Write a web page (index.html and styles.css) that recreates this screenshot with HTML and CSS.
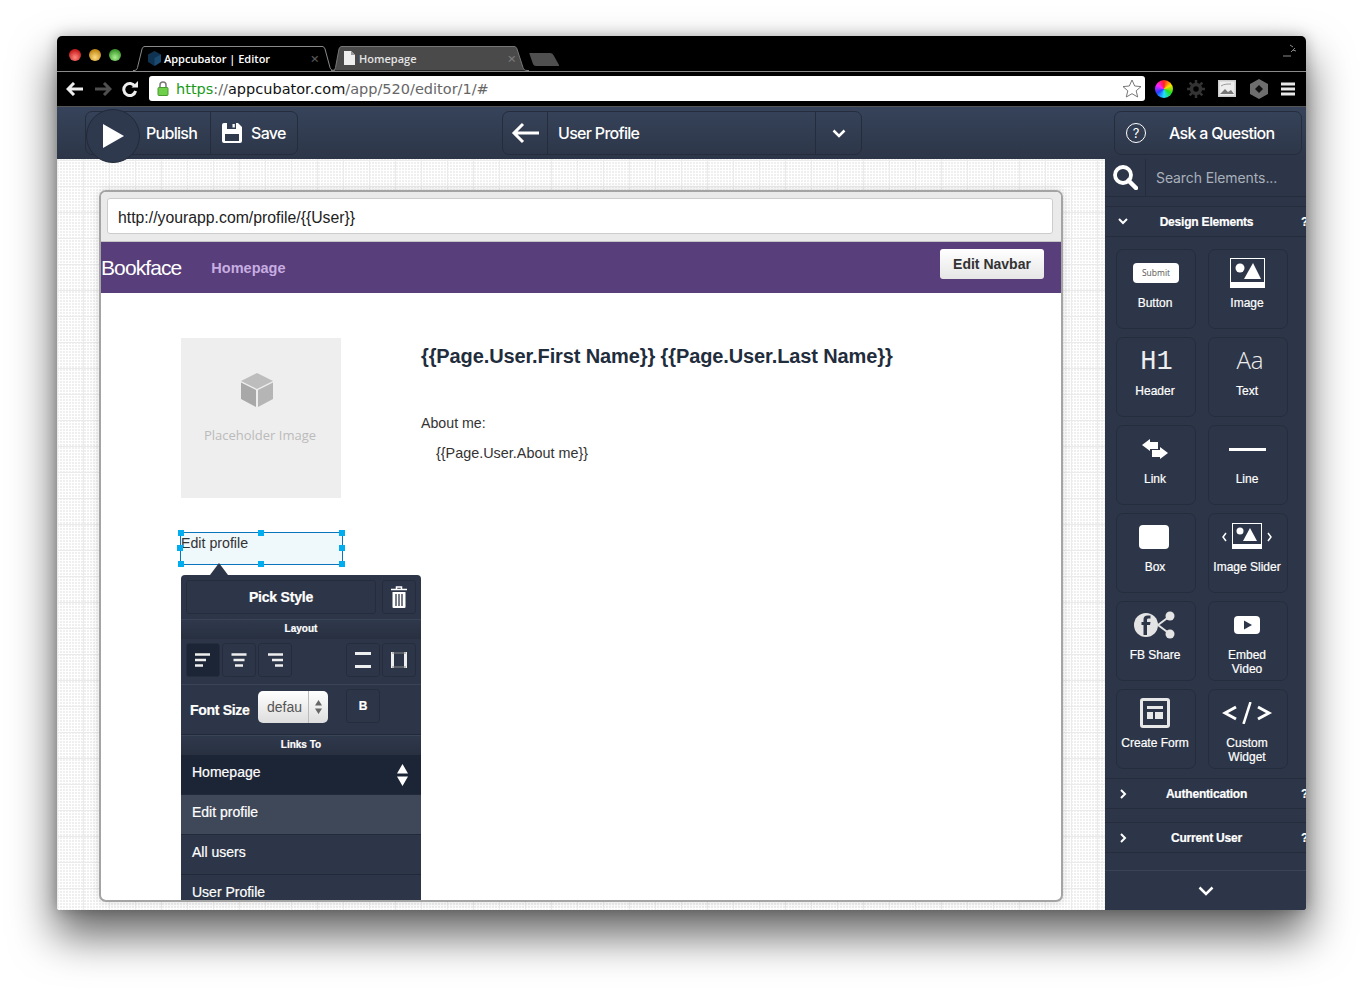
FILE: index.html
```html
<!DOCTYPE html>
<html lang="en">

<head>
    <meta charset="UTF-8">
    <title>Appcubator | Editor</title>
    <link rel="stylesheet" href="styles.css">
</head>

<body>
    <div class="window">

        <!-- browser chrome -->
        <div class="tabbar">
            <div class="lights">
                <span class="light red"></span>
                <span class="light yellow"></span>
                <span class="light green"></span>
            </div>
            <div class="tab tab-active">
                <svg class="tab-shape" width="202" height="25" viewBox="0 0 202 25"><path d="M0 24.500h1c2 0 3-1 3.500-3L9 3c.5-1.600 1.400-2.500 3-2.500h177c1.600 0 2.400.9 3 2.500l5 18.500c.6 2 2 3 4 3h1" fill="#000" stroke="#8a8a8a"/></svg>
                <svg class="tab-icon" width="15" height="15" viewBox="0 0 15 15"><path d="M7.500 0L14 3.500V11L7.500 15 1 11V3.500z" fill="#0f3350"/><path d="M7.500 7L14 3.500V11L7.500 15z" fill="#1a4a70"/></svg>
                <span class="tab-title">Appcubator | Editor</span>
                <span class="tab-x">×</span>
            </div>
            <div class="tab tab-other">
                <svg class="tab-shape" width="202" height="25" viewBox="0 0 202 25"><path d="M0 24.500h1c2 0 3-1 3.500-3L8 3c.5-1.600 1.400-2.500 3-2.500h172c1.600 0 2.400.9 3 2.500l6 18.500c.6 2 2 3 4 3h2" fill="#4a4a4a" stroke="#777"/></svg>
                <svg class="tab-icon" width="11" height="14" viewBox="0 0 11 14"><path d="M0 0h7l4 4v10H0z" fill="#eee"/><path d="M7 0v4h4z" fill="#999"/></svg>
                <span class="tab-title">Homepage</span>
                <span class="tab-x">×</span>
            </div>
            <svg class="new-tab" width="32" height="14" viewBox="0 0 32 14"><path d="M1 1h20c2 0 3 1 4 3l5 9c.3.600 0 1-.6 1H7c-1.500 0-2.400-.7-3-2L.5 2C.2 1.400.4 1 1 1z" fill="#4f4f4f"/></svg>
            <svg class="resize" width="14" height="14" viewBox="0 0 14 14"><path d="M0 13h8M8 9l4-4M7 2l3 2M10 7l3 1" stroke="#8a8a8a" fill="none"/></svg>
        </div>

        <div class="toolbar">
            <svg class="nav-arrow" width="18" height="14" viewBox="0 0 18 14"><path d="M8 1L2 7l6 6M2.500 7H17" fill="none" stroke="#eee" stroke-width="3"/></svg>
            <svg class="nav-arrow" width="18" height="14" viewBox="0 0 18 14"><path d="M10 1l6 6-6 6M15.500 7H1" fill="none" stroke="#4f4f4f" stroke-width="3"/></svg>
            <svg class="nav-arrow" width="16" height="16" viewBox="0 0 16 16"><path d="M13 5.500A6 6 0 1 0 13.600 10" fill="none" stroke="#eee" stroke-width="3"/><path d="M9.500 6.500H16V0z" fill="#eee"/></svg>
            <div class="omnibox">
                <svg class="lock" width="12" height="15" viewBox="0 0 12 15"><path d="M3 7V4a3 3 0 0 1 6 0v3" fill="none" stroke="#777" stroke-width="1.500"/><rect x="1" y="6.500" width="10" height="8" rx="1" fill="#6fcf4a" stroke="#4a9a33"/></svg>
                <span class="url"><span class="url-green">https</span><span class="url-gray">://</span>appcubator.com<span class="url-gray">/app/520/editor/1/#</span></span>
                <svg class="star" width="20" height="19" viewBox="0 0 20 19"><path d="M10 1l2.700 6 6.300.6-4.800 4.200 1.500 6.200L10 14.700 4.300 18l1.500-6.200L1 7.600 7.300 7z" fill="#fff" stroke="#777"/></svg>
            </div>
            <div class="extensions">
                <span class="wheel"></span>
                <svg width="18" height="18" viewBox="0 0 18 18"><circle cx="9" cy="9" r="4.500" fill="none" stroke="#333" stroke-width="3.500"/><path d="M9 0v4M9 14v4M0 9h4M14 9h4M2.600 2.600l2.800 2.800M12.600 12.600l2.800 2.800M2.600 15.400l2.800-2.800M12.600 5.400l2.800-2.800" stroke="#333" stroke-width="2.500"/></svg>
                <svg width="18" height="17" viewBox="0 0 18 17"><rect width="18" height="17" fill="#ccc"/><rect x="1.500" y="1.500" width="15" height="14" fill="#eee"/><path d="M2 14l5-5 3 3 3-2 3 4z" fill="#777"/><path d="M3 6c3-2 6-2 10-2" stroke="#999" fill="none"/></svg>
                <svg width="18" height="20" viewBox="0 0 18 20"><path d="M9 0l9 5v10l-9 5-9-5V5z" fill="#6e6e6e"/><path d="M9 6l4 4-4 4-4-4z" fill="#111"/></svg>
                <svg width="14" height="14" viewBox="0 0 14 14"><path d="M0 2h14M0 7h14M0 12h14" stroke="#e8e8e8" stroke-width="3"/></svg>
            </div>
        </div>

        <!-- editor header -->
        <div class="app-header">
            <div class="group group-left">
                <div class="play">
                    <svg width="21" height="24" viewBox="0 0 21 24"><path d="M0 0l21 12L0 24z" fill="#fff"/></svg>
                </div>
                <div class="cell cell-publish">Publish</div>
                <div class="cell cell-save">
                    <svg width="20" height="20" viewBox="0 0 20 20"><path d="M2 0h3v6h9V0h2l4 4v14a2 2 0 0 1-2 2H2a2 2 0 0 1-2-2V2a2 2 0 0 1 2-2z" fill="#fff"/><rect x="10.500" y="1" width="2.300" height="3.500" fill="#fff"/><rect x="3" y="11" width="14" height="7" fill="#2f3a4d"/></svg>
                    Save
                </div>
            </div>
            <div class="group group-page">
                <div class="cell cell-back">
                    <svg width="28" height="22" viewBox="0 0 28 22"><path d="M12 2L3 11l9 9M4 11h24" fill="none" stroke="#fff" stroke-width="3"/></svg>
                </div>
                <div class="cell cell-page">User Profile</div>
                <div class="cell cell-down">
                    <svg width="14" height="9" viewBox="0 0 14 9"><path d="M1.500 1.500L7 7l5.500-5.500" fill="none" stroke="#fff" stroke-width="2.500"/></svg>
                </div>
            </div>
            <div class="group group-help">
                <span class="help-mark">?</span>
                <span>Ask a Question</span>
            </div>
        </div>

        <div class="workspace">
            <div class="canvas">
                <div class="frame">
                    <div class="frame-top">
                        <div class="route">http://yourapp.com/profile/{{User}}</div>
                    </div>
                    <div class="navbar">
                        <span class="brand">Bookface</span>
                        <span class="nav-link">Homepage</span>
                        <span class="edit-navbar">Edit Navbar</span>
                    </div>
                    <div class="page">
                        <div class="page-left">
                            <div class="placeholder">
                                <svg class="cube" width="32" height="34" viewBox="0 0 32 34"><path d="M16 0l16 8-16 8L0 8z" fill="#bdbdbd"/><path d="M0 9.500l15 7.500v17L0 26z" fill="#a8a8a8"/><path d="M32 9.500L17 17v17l15-8z" fill="#b5b5b5"/></svg>
                                <span>Placeholder Image</span>
                            </div>
                            <div class="selected">
                                Edit profile
                                <span class="handle h-tl"></span>
                                <span class="handle h-tm"></span>
                                <span class="handle h-tr"></span>
                                <span class="handle h-ml"></span>
                                <span class="handle h-mr"></span>
                                <span class="handle h-bl"></span>
                                <span class="handle h-bm"></span>
                                <span class="handle h-br"></span>

                                <div class="popover">
                                    <div class="pop-row pop-style">
                                        <div class="pop-btn pick-style">Pick Style</div>
                                        <div class="pop-btn square">
                                            <svg width="16" height="22" viewBox="0 0 16 22"><path d="M0 3.500h16M5.500 3V1h5v2" fill="none" stroke="#fff" stroke-width="1.500"/><path d="M1.500 6h13v15a1 1 0 0 1-1 1h-11a1 1 0 0 1-1-1z" fill="#fff"/><path d="M5 8v12M8 8v12M11 8v12" stroke="#2d3648" stroke-width="1.300"/></svg>
                                        </div>
                                    </div>
                                    <div class="pop-title">Layout</div>
                                    <div class="pop-row pop-layout">
                                        <div class="pop-btn square active">
                                            <svg width="16" height="14" viewBox="0 0 16 14"><path d="M0 1.500h15M0 7h11M0 12.500h8" stroke="#eee" stroke-width="2.500"/></svg>
                                        </div>
                                        <div class="pop-btn square">
                                            <svg width="16" height="14" viewBox="0 0 16 14"><path d="M.5 1.500h15M2.500 7h11M4 12.500h8" stroke="#eee" stroke-width="2.500"/></svg>
                                        </div>
                                        <div class="pop-btn square">
                                            <svg width="16" height="14" viewBox="0 0 16 14"><path d="M1 1.500h15M5 7h11M8 12.500h8" stroke="#eee" stroke-width="2.500"/></svg>
                                        </div>
                                        <div class="pop-btn square push">
                                            <svg width="16" height="16" viewBox="0 0 16 16"><path d="M0 1.500h16M0 14.500h16" stroke="#eee" stroke-width="3"/></svg>
                                        </div>
                                        <div class="pop-btn square">
                                            <svg width="16" height="16" viewBox="0 0 16 16"><path d="M1.500 0v16M14.500 0v16" stroke="#eee" stroke-width="3"/><path d="M1 1h14M1 15h14" stroke="#888"/></svg>
                                        </div>
                                    </div>
                                    <div class="pop-row pop-font">
                                        <span class="font-label">Font Size</span>
                                        <div class="font-select">
                                            <span class="font-value">defau</span>
                                            <span class="font-caret">
                                                <svg width="7" height="14" viewBox="0 0 7 14"><path d="M3.500 0L7 5.500H0zM3.500 14L0 8.500h7z" fill="#666"/></svg>
                                            </span>
                                        </div>
                                        <div class="pop-btn square bold">B</div>
                                    </div>
                                    <div class="pop-title">Links To</div>
                                    <div class="link-row link-current">
                                        Homepage
                                        <svg class="link-caret" width="11" height="22" viewBox="0 0 11 22"><path d="M5.500 0L11 9.500H0zM5.500 22L0 12.500h11z" fill="#fff"/></svg>
                                    </div>
                                    <div class="link-row link-hover">Edit profile</div>
                                    <div class="link-row">All users</div>
                                    <div class="link-row">User Profile</div>
                                </div>
                            </div>
                        </div>
                        <div class="page-right">
                            <h2 class="user-name">{{Page.User.First Name}} {{Page.User.Last Name}}</h2>
                            <p class="about-label">About me:</p>
                            <p class="about-value">{{Page.User.About me}}</p>
                        </div>
                    </div>
                </div>
            </div>

            <!-- element gallery -->
            <div class="sidebar">
                <div class="search">
                    <div class="search-icon">
                        <svg width="25" height="25" viewBox="0 0 25 25"><circle cx="10" cy="10" r="8" fill="none" stroke="#fff" stroke-width="3.800"/><path d="M15.500 15.500L23 23" stroke="#fff" stroke-width="4.500" stroke-linecap="round"/></svg>
                    </div>
                    <div class="search-text">Search Elements...</div>
                </div>
                <div class="section-head section-open">
                    <svg width="10" height="7" viewBox="0 0 10 7"><path d="M1 1l4 4 4-4" fill="none" stroke="#fff" stroke-width="2"/></svg>
                    <span class="section-name">Design Elements</span>
                    <span class="section-q">?</span>
                </div>
                <div class="tiles">
                    <div class="tile">
                        <div class="tile-icon"><span class="submit-pill">Submit</span></div>
                        <span>Button</span>
                    </div>
                    <div class="tile">
                        <div class="tile-icon">
                            <svg width="35" height="30" viewBox="0 0 35 30"><rect width="35" height="30" fill="#fff"/><rect x="1" y="1" width="33" height="23" fill="#2d3648"/><circle cx="10" cy="10" r="4.500" fill="#fff"/><path d="M23 5l8 16H14z" fill="#fff"/></svg>
                        </div>
                        <span>Image</span>
                    </div>
                    <div class="tile">
                        <div class="tile-icon glyph-h1">H1</div>
                        <span>Header</span>
                    </div>
                    <div class="tile">
                        <div class="tile-icon glyph-aa">Aa</div>
                        <span>Text</span>
                    </div>
                    <div class="tile">
                        <div class="tile-icon">
                            <svg width="26" height="20" viewBox="0 0 26 20"><path d="M0 6l8-6v3h8v7H8v2z" fill="#fff"/><path d="M26 14l-8-6v3h-8v7h8v2z" fill="#fff"/></svg>
                        </div>
                        <span>Link</span>
                    </div>
                    <div class="tile">
                        <div class="tile-icon"><span class="line-bar"></span></div>
                        <span>Line</span>
                    </div>
                    <div class="tile">
                        <div class="tile-icon"><span class="box-shape"></span></div>
                        <span>Box</span>
                    </div>
                    <div class="tile">
                        <div class="tile-icon">
                            <svg width="52" height="28" viewBox="0 0 52 28"><path d="M5 10l-3 4 3 4M47 10l3 4-3 4" fill="none" stroke="#fff" stroke-width="1.500"/><rect x="11" y="0" width="30" height="26" fill="#fff"/><rect x="12" y="1" width="28" height="20" fill="#2d3648"/><circle cx="19" cy="8" r="3.500" fill="#fff"/><path d="M29 5l7 13H22z" fill="#fff"/></svg>
                        </div>
                        <span>Image Slider</span>
                    </div>
                    <div class="tile">
                        <div class="tile-icon">
                            <svg width="42" height="28" viewBox="0 0 42 28"><path d="M24 14L36 5M24 14l12 9" stroke="#e4e4e4" stroke-width="2"/><circle cx="36" cy="5" r="4.500" fill="#e4e4e4"/><circle cx="36" cy="23" r="4.500" fill="#e4e4e4"/><circle cx="12" cy="14" r="12" fill="#e4e4e4"/><path d="M13 24V14h3l.5-3H13V9c0-1 .5-1.500 1.500-1.500h2V4.500h-3C11 4.500 9.500 6 9.500 8.500V11H7.500v3h2v10z" fill="#2d3648"/></svg>
                        </div>
                        <span>FB Share</span>
                    </div>
                    <div class="tile">
                        <div class="tile-icon">
                            <svg width="26" height="18" viewBox="0 0 26 18"><rect width="26" height="18" rx="4" fill="#fff"/><path d="M10 4.500l8 4.500-8 4.500z" fill="#2d3648"/></svg>
                        </div>
                        <span>Embed<br>Video</span>
                    </div>
                    <div class="tile">
                        <div class="tile-icon">
                            <svg width="30" height="30" viewBox="0 0 30 30"><rect x="1.500" y="1.500" width="27" height="27" rx="1.500" fill="none" stroke="#e8e8e8" stroke-width="3"/><path d="M7 8h16v3H7zM7 14h6v7H7zM15 14h8v7h-8z" fill="#e8e8e8"/></svg>
                        </div>
                        <span>Create Form</span>
                    </div>
                    <div class="tile">
                        <div class="tile-icon">
                            <svg width="50" height="22" viewBox="0 0 50 22"><path d="M14 5L3 11l11 6M36 5l11 6-11 6" fill="none" stroke="#fff" stroke-width="3"/><path d="M28.500 0l-7 22" stroke="#fff" stroke-width="2.500"/></svg>
                        </div>
                        <span>Custom<br>Widget</span>
                    </div>
                </div>
                <div class="section-head section-auth">
                    <svg width="7" height="10" viewBox="0 0 7 10"><path d="M1 1l4 4-4 4" fill="none" stroke="#fff" stroke-width="2"/></svg>
                    <span class="section-name">Authentication</span>
                    <span class="section-q">?</span>
                </div>
                <div class="section-head section-user">
                    <svg width="7" height="10" viewBox="0 0 7 10"><path d="M1 1l4 4-4 4" fill="none" stroke="#fff" stroke-width="2"/></svg>
                    <span class="section-name">Current User</span>
                    <span class="section-q">?</span>
                </div>
                <div class="sidebar-foot">
                    <svg width="16" height="10" viewBox="0 0 16 10"><path d="M1.500 1.500L8 8l6.500-6.500" fill="none" stroke="#fff" stroke-width="2.500"/></svg>
                </div>
            </div>
        </div>
    </div>
</body>

</html>
```

FILE: styles.css
```css
* {
    box-sizing: border-box;
}

html, body {
    height: 100%;
}

body {
    margin: 0;
    background-color: white;
    padding: 36px 0 0 57px;
    font-family: "Liberation Sans", Arial, sans-serif;
    overflow: hidden;
}

.window {
    width: 1249px;
    height: 874px;
    border-radius: 5px 5px 3px 3px;
    box-shadow: 0 24px 44px 2px rgba(0, 0, 0, 0.6), 0 0 14px rgba(0, 0, 0, 0.25);
    display: flex;
    flex-direction: column;
    overflow: hidden;
}

/* tabs */
.tabbar {
    height: 36px;
    background-color: #000;
    border-bottom: 1px solid #8a8a8a;
    display: flex;
    align-items: flex-end;
    flex: none;
}

.lights {
    width: 76px;
    height: 35px;
    padding: 13px 0 0 12px;
    display: flex;
    gap: 8px;
}

.light {
    width: 12px;
    height: 12px;
    border-radius: 50%;
}

.red { background: radial-gradient(circle at 50% 70%, #ff8a80, #c81e1e 70%); }
.yellow { background: radial-gradient(circle at 50% 70%, #ffdd80, #c48a1a 70%); }
.green { background: radial-gradient(circle at 50% 70%, #a8f090, #3f9a2e 70%); }

.tab {
    position: relative;
    height: 25px;
    width: 198px;
    display: flex;
    align-items: center;
    font-family: "Open Sans", sans-serif;
    font-size: 11px;
    font-weight: 600;
    color: #fff;
    padding-left: 14px;
    padding-bottom: 1px;
}

.tab-shape {
    position: absolute;
    left: 0;
    top: 0;
}

.tab-icon, .tab-title, .tab-x {
    position: relative;
}

.tab-title {
    margin-left: 2px;
    flex: 1;
}

.tab-x {
    font-size: 15px;
    color: #555;
    margin-right: 12px;
}

.tab-other {
    color: #e4e4e4;
    padding-left: 13px;
    width: 197px;
}

.tab-other .tab-title {
    margin-left: 4px;
}

.tab-other .tab-x {
    color: #777;
}

.new-tab {
    margin: 0 0 5px 1px;
}

.resize {
    margin: 0 9px 14px auto;
}

/* address bar */
.toolbar {
    height: 35px;
    flex: none;
    background-color: #000;
    border-bottom: 1px solid #555;
    display: flex;
    align-items: center;
    padding: 0 11px 1px 9px;
}

.nav-arrow {
    margin-right: 10px;
    flex: none;
}

.nav-arrow:nth-child(3) {
    margin-right: 11px;
}

.omnibox {
    width: 996px;
    height: 25px;
    background-color: #fff;
    border-radius: 3px;
    display: flex;
    align-items: center;
    padding: 0 3px 0 8px;
    flex: none;
}

.url {
    margin-left: 7px;
    font-family: "DejaVu Sans", sans-serif;
    font-size: 14.500px;
    color: #111;
    flex: 1;
}

.url-green { color: #1a9a1a; }
.url-gray { color: #666; }

.extensions {
    flex: 1;
    display: flex;
    align-items: center;
    justify-content: space-between;
    padding-left: 10px;
}

.wheel {
    width: 18px;
    height: 18px;
    border-radius: 50%;
    background: conic-gradient(#ff2020, #ffe000, #20e020, #20e0ff, #2040ff, #ff20ff, #ff2020);
}

/* editor header */
.app-header {
    height: 52px;
    flex: none;
    background: linear-gradient(#36435a, #2d3648);
    display: flex;
    align-items: flex-start;
    padding: 4px 4px 0 28px;
    color: #fff;
    font-family: "Inter", sans-serif;
    font-size: 16px;
    font-weight: 500;
    letter-spacing: -0.700px;
}

.group {
    height: 44px;
    border: 1px solid #252d3d;
    border-radius: 7px;
    display: flex;
    align-items: stretch;
}

.group-left {
    position: relative;
    width: 213px;
    padding-left: 60px;
}

.play {
    position: absolute;
    left: 0;
    top: -3px;
    width: 54px;
    height: 54px;
    border-radius: 50%;
    background: #2e394d;
    border: 1px solid #222a3a;
    display: flex;
    align-items: center;
    justify-content: center;
    z-index: 2;
}

.cell {
    display: flex;
    align-items: center;
}

.cell-publish {
    width: 65px;
    border-right: 1px solid #252d3d;
}

.cell-save {
    gap: 9px;
    padding-left: 11px;
}

.group-page {
    width: 360px;
    margin-left: 204px;
}

.cell-back {
    width: 45px;
    justify-content: center;
    border-right: 1px solid #252d3d;
}

.cell-page {
    flex: 1;
    padding-left: 10px;
}

.cell-down {
    width: 46px;
    justify-content: center;
    border-left: 1px solid #252d3d;
    padding-left: 1px;
}

.group-help {
    width: 188px;
    margin-left: auto;
    align-items: center;
    padding-left: 11px;
    gap: 23px;
}

.help-mark {
    width: 20px;
    height: 20px;
    border: 1px solid #fff;
    border-radius: 50%;
    font-size: 13px;
    font-weight: 400;
    display: flex;
    align-items: center;
    justify-content: center;
    letter-spacing: 0;
}

/* canvas */
.workspace {
    flex: 1;
    display: flex;
    min-height: 0;
}

.canvas {
    flex: 1;
    padding: 31px 0 0 42px;
    background-color: #fff;
    background-image:
        linear-gradient(#ebebeb 1px, transparent 1px),
        linear-gradient(90deg, #ebebeb 1px, transparent 1px),
        radial-gradient(circle at 1px 1px, #efefef 0.8px, transparent 0.9px);
    background-size: 26px 26px, 26px 26px, 3px 3px;
    background-position: 0 1px, 0 0, 0 0;
}

.frame {
    width: 964px;
    height: 712px;
    border: 2px solid #a4a4a4;
    border-radius: 7px;
    background-color: #fff;
    box-shadow: 0 0 8px rgba(0, 0, 0, 0.14);
    overflow: hidden;
    display: flex;
    flex-direction: column;
}

.frame-top {
    height: 50px;
    flex: none;
    padding: 6px 8px 8px 6px;
    background-color: #eaeaea;
    border-bottom: 1px solid #c4c4c4;
}

.route {
    height: 36px;
    background-color: #fff;
    border: 1px solid #ccc;
    border-radius: 3px;
    padding: 0 10px;
    line-height: 37px;
    font-size: 15.800px;
    color: #222;
}

.navbar {
    height: 51px;
    flex: none;
    background-color: #583e7a;
    display: flex;
    align-items: center;
}

.brand {
    font-size: 21px;
    color: #fff;
    letter-spacing: -0.900px;
}

.nav-link {
    margin-left: 30px;
    font-size: 14.500px;
    font-weight: bold;
    color: #c7aee2;
}

.edit-navbar {
    margin: 0 17px 8px auto;
    width: 104px;
    height: 30px;
    background: linear-gradient(#fff, #e6e6e6);
    border-radius: 3px;
    text-align: center;
    line-height: 30px;
    font-size: 14px;
    font-weight: bold;
    color: #333;
}

.page {
    flex: 1;
    display: flex;
    padding: 45px 0 0 80px;
    gap: 80px;
    min-height: 0;
}

.page-left {
    width: 160px;
    flex: none;
}

.placeholder {
    width: 160px;
    height: 160px;
    background-color: #eee;
    display: flex;
    flex-direction: column;
    align-items: center;
    padding-top: 35px;
    gap: 19px;
    font-family: "Open Sans", sans-serif;
    font-size: 13px;
    color: #bbb;
}

.placeholder span {
    margin-right: 2px;
}

.cube {
    margin-right: 8px;
}

.selected {
    position: relative;
    width: 163px;
    height: 33px;
    margin: 34px 0 0 -1px;
    border: 1px solid #0a75bd;
    background-color: #eff8fb;
    font-size: 14.200px;
    color: #333;
    line-height: 20px;
}

.handle {
    position: absolute;
    width: 6px;
    height: 6px;
    background-color: #00aeef;
}

.h-tl { left: -3px; top: -3px; }
.h-tm { left: 77px; top: -3px; }
.h-tr { right: -3px; top: -3px; }
.h-ml { left: -4px; top: 12px; }
.h-mr { right: -3px; top: 12px; }
.h-bl { left: -3px; bottom: -3px; }
.h-bm { left: 77px; bottom: -3px; }
.h-br { right: -3px; bottom: -3px; }

/* style popover */
.popover {
    position: absolute;
    left: 0;
    top: 42px;
    width: 240px;
    height: 340px;
    background-color: #2d3648;
    border-radius: 4px 4px 0 0;
    color: #fff;
    -webkit-text-stroke: 0.200px #fff;
}

.popover::before {
    content: "";
    position: absolute;
    left: 29px;
    top: -12px;
    border: 9px solid transparent;
    border-top-width: 0;
    border-bottom: 12px solid #2d3648;
}

.pop-row {
    display: flex;
    gap: 2px;
    padding: 5px;
}

.pop-btn {
    height: 34px;
    border: 1px solid #252d3d;
    border-radius: 3px;
    display: flex;
    align-items: center;
    justify-content: center;
}

.square {
    width: 34px;
    flex: none;
}

.pick-style {
    width: 190px;
    margin-right: 4px;
    font-size: 14px;
    font-weight: bold;
    letter-spacing: -0.200px;
}

.pop-style {
    height: 44px;
}

.pop-title {
    height: 20px;
    background: linear-gradient(#2f394c, #283040);
    border-top: 1px solid #3a4456;
    text-align: center;
    font-size: 10px;
    font-weight: bold;
    line-height: 18px;
}

.pop-layout {
    height: 46px;
    padding-top: 4px;
    border-bottom: 1px solid #3a4456;
}

.active {
    background-color: #1c2536;
}

.push {
    margin-left: 52px;
}

.pop-font {
    height: 50px;
    padding: 4px 0 0 9px;
    gap: 0;
    border-bottom: 1px solid #222a3a;
    position: relative;
}

.font-label {
    width: 68px;
    padding-top: 11px;
    font-size: 14px;
    font-weight: bold;
    letter-spacing: -0.300px;
}

.font-select {
    width: 70px;
    height: 32px;
    margin-top: 2px;
    background: linear-gradient(#fff, #ddd);
    border-radius: 5px;
    display: flex;
    align-items: center;
    color: #555;
    font-size: 14px;
    -webkit-text-stroke: 0;
}

.font-value {
    width: 50px;
    padding-left: 9px;
}

.font-caret {
    flex: 1;
    height: 100%;
    border-left: 1px solid #bbb;
    display: flex;
    align-items: center;
    justify-content: center;
}

.bold {
    margin-left: 18px;
    font-size: 12px;
    font-weight: bold;
}

.link-row {
    height: 40px;
    display: flex;
    align-items: center;
    justify-content: space-between;
    padding: 0 13px 5px 11px;
    border-bottom: 1px solid #222a3a;
    font-size: 14px;
}

.link-current {
    background-color: #1c2536;
    height: 40px;
}

.link-caret {
    margin-top: 5px;
}

.link-hover {
    background-color: #3f4859;
}

.user-name {
    margin: 6px 0 0;
    font-size: 20px;
    line-height: 24px;
    color: #1f2d3d;
    letter-spacing: -0.110px;
    white-space: nowrap;
}

.about-label {
    margin: 45px 0 0;
    font-size: 14.200px;
    line-height: 20px;
    color: #333;
}

.about-value {
    margin: 10px 0 0 15px;
    font-size: 14.400px;
    line-height: 20px;
    color: #333;
}

/* element gallery */
.sidebar {
    width: 201px;
    flex: none;
    background-color: #2d3648;
    color: #fff;
    overflow: hidden;
    display: flex;
    flex-direction: column;
    position: relative;
}

.search {
    height: 38px;
    flex: none;
    display: flex;
    border-bottom: 1px solid #252d3d;
}

.search-icon {
    width: 41px;
    display: flex;
    align-items: center;
    justify-content: center;
    border-right: 1px solid #252d3d;
    padding-left: 1px;
}

.search-text {
    padding-left: 10px;
    line-height: 37px;
    font-family: "Inter", sans-serif;
    font-size: 14px;
    letter-spacing: -0.100px;
    color: #a9b0bb;
}

.section-head {
    height: 31px;
    flex: none;
    display: flex;
    align-items: center;
    position: relative;
    padding-left: 13px;
    border-top: 1px solid #252d3d;
    border-bottom: 1px solid #252d3d;
    font-size: 12px;
    font-weight: bold;
    letter-spacing: -0.200px;
    -webkit-text-stroke: 0.200px #fff;
}

.section-name {
    position: absolute;
    left: 0;
    width: 203px;
    text-align: center;
}

.section-q {
    position: absolute;
    left: 196px;
}

.section-open {
    margin-top: 9px;
}

.section-auth {
    margin-top: 9px;
    padding-left: 15px;
}

.section-user {
    margin-top: 13px;
    padding-left: 15px;
}

.tiles {
    display: grid;
    grid-template-columns: 80px 80px;
    grid-auto-rows: 80px;
    gap: 8px 12px;
    padding: 12px 0 0 11px;
    flex: none;
}

.tile {
    border: 1px solid #252d3d;
    border-radius: 7px;
    display: flex;
    flex-direction: column;
    align-items: center;
    padding-right: 2px;
    font-size: 12px;
    line-height: 14px;
    text-align: center;
    -webkit-text-stroke: 0.200px #fff;
}

.tile-icon {
    height: 46px;
    flex: none;
    display: flex;
    align-items: center;
    justify-content: center;
    -webkit-text-stroke: 0;
}

.submit-pill {
    width: 46px;
    height: 20px;
    margin-left: 2px;
    background-color: #fff;
    border-radius: 4px;
    font-family: "Open Sans", sans-serif;
    font-size: 8.500px;
    line-height: 20px;
    color: #555;
}

.glyph-h1 {
    font-family: "Liberation Mono", monospace;
    font-size: 27px;
    color: #eee;
    padding: 2px 0 0 3px;
}

.glyph-aa {
    font-family: "Open Sans", sans-serif;
    font-weight: 300;
    font-size: 24px;
    color: #eee;
    padding: 0 0 2px 6px;
}

.line-bar {
    width: 37px;
    height: 3px;
    background-color: #fff;
}

.box-shape {
    width: 30px;
    height: 24px;
    margin-right: 2px;
    background-color: #fff;
    border-radius: 4px;
}

.sidebar-foot {
    position: absolute;
    left: 0;
    right: 0;
    bottom: 0;
    height: 40px;
    border-top: 1px solid #3a4456;
    background-color: #2d3648;
    display: flex;
    align-items: center;
    justify-content: center;
}
```
